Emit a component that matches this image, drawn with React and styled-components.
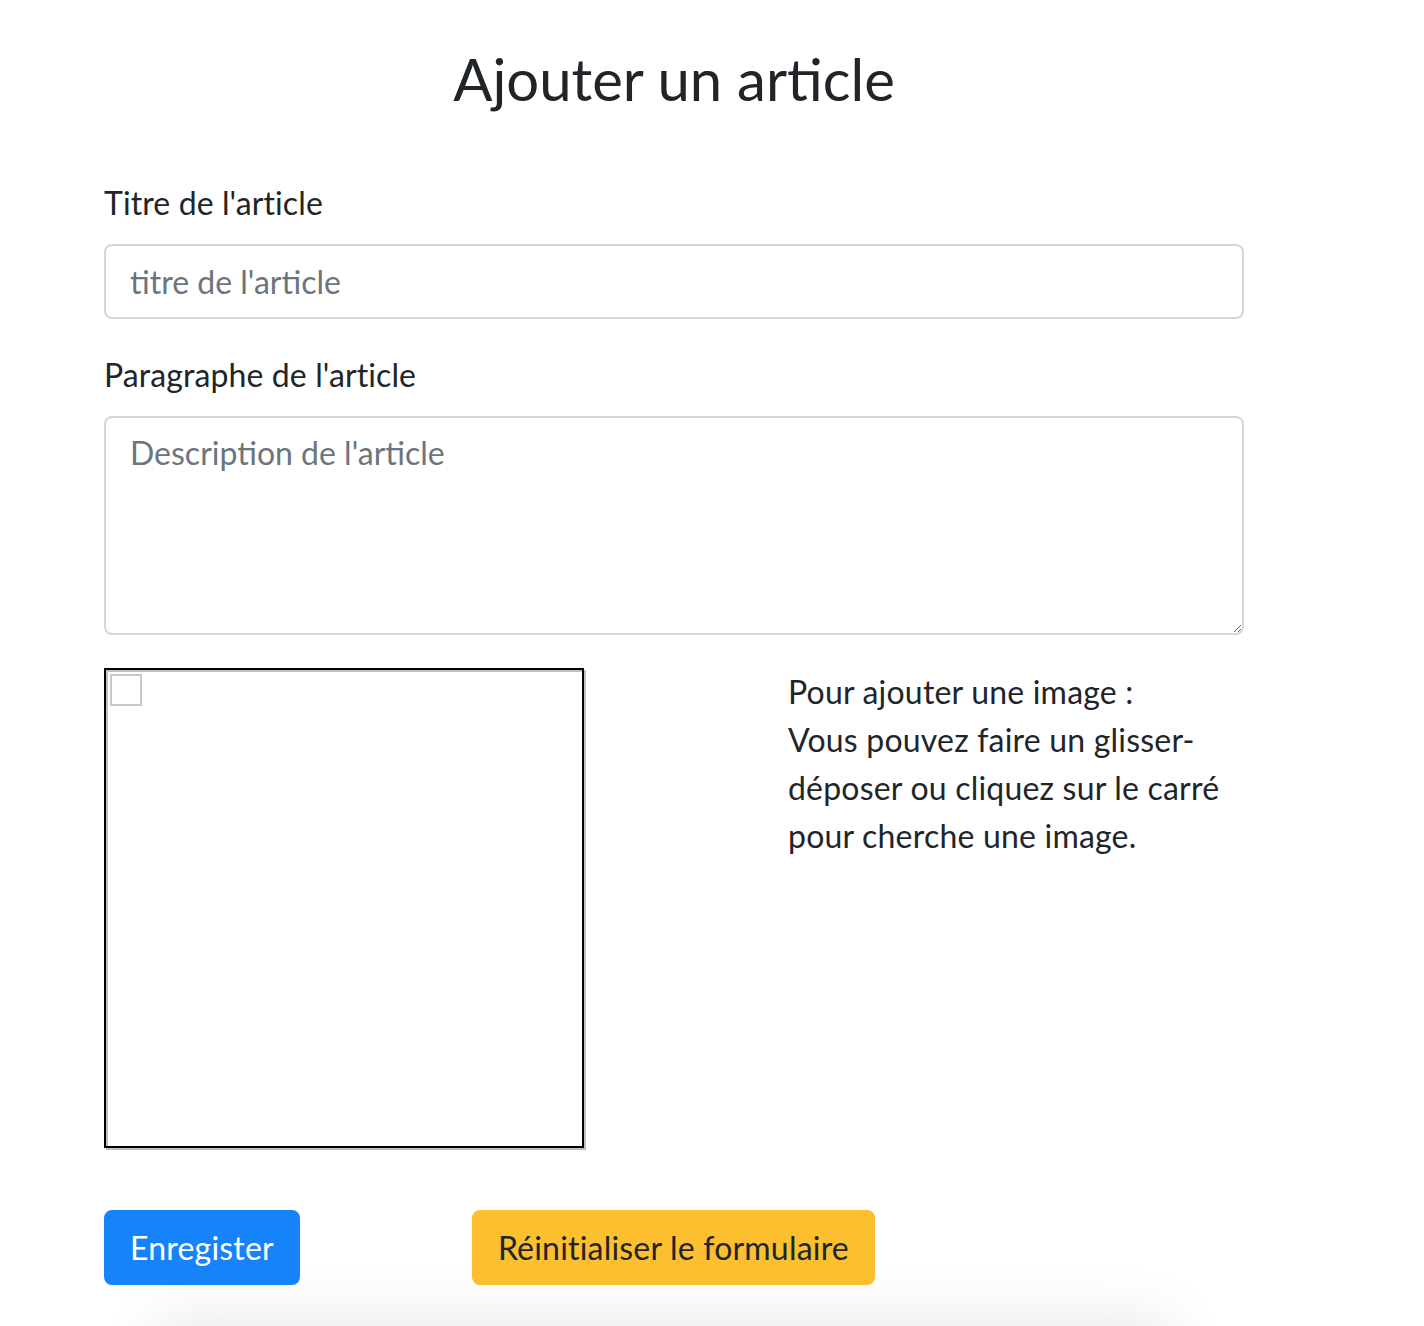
import React from "react";
import styled, { createGlobalStyle } from "styled-components";

const Global = createGlobalStyle`
  html, body { margin: 0; padding: 0; background: #fff; }
  body {
    font-family: "Lato", "Noto Sans", sans-serif;
    color: #212529;
    -webkit-font-smoothing: antialiased;
  }
  * { box-sizing: border-box; }
`;

const Page = styled.main`
  width: 1140px;
  margin-left: 104px;
  padding-top: 44px;
`;

const Title = styled.h1`
  margin: 0 0 65px;
  text-align: center;
  font-size: 58px;
  font-weight: 400;
  line-height: 1.2;
  color: #212529;
`;

const Form = styled.form`
  display: flex;
  flex-direction: column;
`;

const Group = styled.div`
  display: flex;
  flex-direction: column;
  margin-bottom: 32px;
`;

const Label = styled.label`
  font-size: 32px;
  line-height: 48px;
  letter-spacing: 0.1px;
  margin-bottom: 17px;
`;

const fieldCss = `
  width: 1140px;
  font-family: inherit;
  font-size: 32px;
  line-height: 48px;
  color: #495057;
  background: #fff;
  border: 2px solid #d3d7dc;
  border-radius: 8px;
  padding: 11px 24px;
  outline: none;
  &::placeholder { color: #6c757d; opacity: 1; }
`;

const Input = styled.input`
  ${fieldCss}
  height: 75px;
`;

const TextArea = styled.textarea`
  ${fieldCss}
  height: 219px;
  resize: vertical;
  display: block;
`;

const UploadRow = styled.div`
  display: grid;
  grid-template-columns: 480px 1fr;
  column-gap: 204px;
  margin-top: 1px;
`;

const DropZone = styled.div`
  position: relative;
  width: 480px;
  height: 480px;
  border: 2px solid #000;
  box-shadow: inset 2px 2px 0 #c0c0c0, 2px 2px 0 #c0c0c0;
  background: #fff;
  cursor: pointer;
`;

const BrokenIcon = styled.span`
  position: absolute;
  left: 4px;
  top: 4px;
  width: 32px;
  height: 32px;
  border: 2px solid #c8c8c8;
`;

const Help = styled.p`
  margin: 0;
  font-size: 32px;
  line-height: 48px;
  letter-spacing: 0.2px;
  color: #212529;
`;

const Actions = styled.div`
  display: flex;
  gap: 172px;
  margin-top: 62px;
`;

const Button = styled.button`
  font-family: inherit;
  font-size: 32px;
  line-height: 48px;
  letter-spacing: 0.2px;
  height: 75px;
  padding: 12px 24px;
  border: 2px solid ${(p) => p.$bg};
  border-radius: 8px;
  background: ${(p) => p.$bg};
  color: ${(p) => p.$fg};
  cursor: pointer;
`;

const NextCard = styled.section`
  margin: 55px 90px 0 70px;
  height: 300px;
  background: #fff;
  box-shadow: 0 0 60px 16px rgba(0, 0, 0, 0.11);
`;

export default function App() {
  return (
    <>
      <Global />
      <Page>
        <Title>Ajouter un article</Title>
        <Form onSubmit={(e) => e.preventDefault()}>
          <Group>
            <Label htmlFor="titre">Titre de l'article</Label>
            <Input id="titre" placeholder="titre de l'article" />
          </Group>
          <Group>
            <Label htmlFor="para">Paragraphe de l'article</Label>
            <TextArea id="para" placeholder="Description de l'article" />
          </Group>
          <UploadRow>
            <DropZone>
              <BrokenIcon />
            </DropZone>
            <Help>
              Pour ajouter une image :<br />
              Vous pouvez faire un glisser-<br />
              déposer ou cliquez sur le carré<br />
              pour cherche une image.
            </Help>
          </UploadRow>
          <Actions>
            <Button type="submit" $bg="#1783fb" $fg="#fff">Enregister</Button>
            <Button type="reset" $bg="#fbbf2f" $fg="#212529">Réinitialiser le formulaire</Button>
          </Actions>
        </Form>
        <NextCard />
      </Page>
    </>
  );
}
